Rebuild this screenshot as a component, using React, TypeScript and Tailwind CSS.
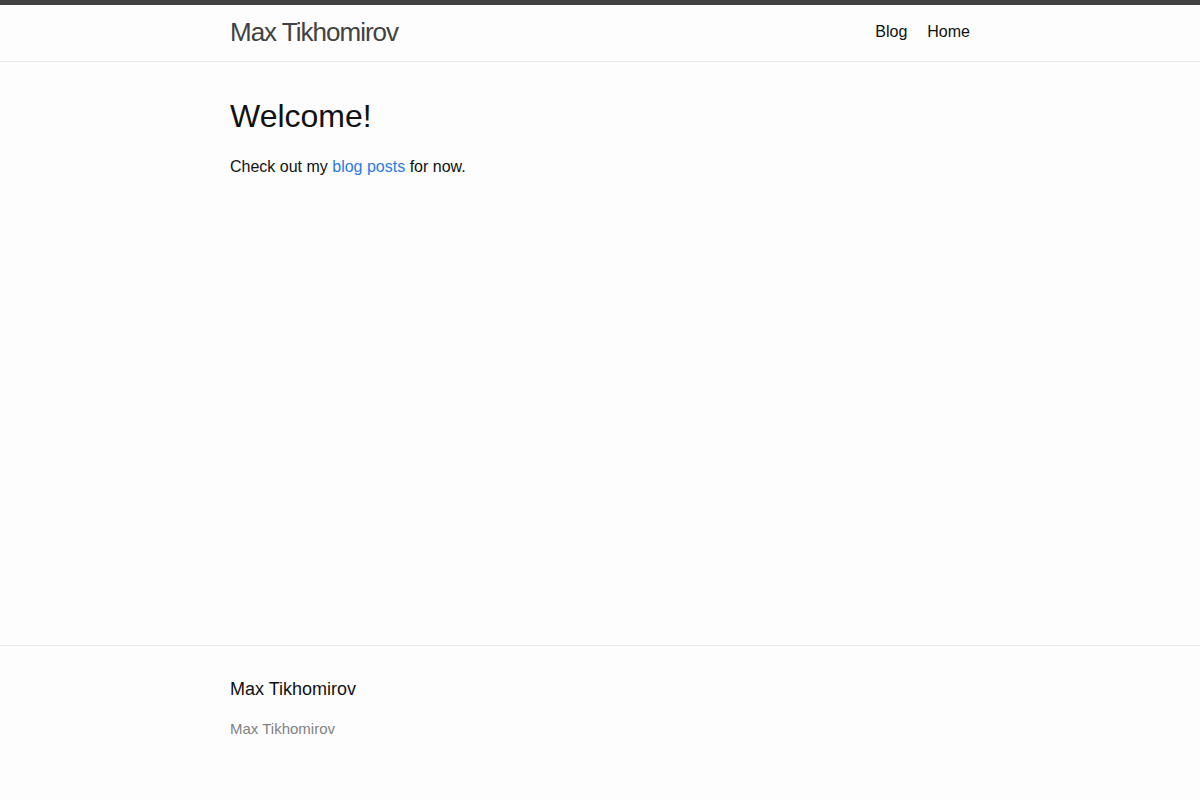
export default function App() {
  return (
    <div
      className="flex min-h-screen flex-col bg-[#fdfdfd] text-base leading-normal text-[#111]"
      style={{ fontFamily: '"Liberation Sans", Arial, sans-serif' }}
    >
      <header className="min-h-[62px] border-t-[5px] border-b border-t-[#424242] border-b-[#e8e8e8]">
        <div className="mx-auto flex max-w-[800px] items-start justify-between px-[30px]">
          <a href="#" className="text-[26px] font-light leading-[54px] tracking-[-1px] text-[#424242]">
            Max Tikhomirov
          </a>
          <nav className="flex gap-5 leading-[53px]">
            <a href="#" className="text-[#111]">Blog</a>
            <a href="#" className="text-[#111]">Home</a>
          </nav>
        </div>
      </header>

      <main className="flex-1 py-[30px]">
        <div className="mx-auto max-w-[800px] px-[30px]">
          <h1 className="mb-[15px] text-[32px] font-normal leading-normal">Welcome!</h1>
          <p>
            Check out my{' '}
            <a href="#" className="text-[#2a7ae2]">blog posts</a>{' '}
            for now.
          </p>
        </div>
      </main>

      <footer className="border-t border-[#e8e8e8] pt-[30px] pb-[60px]">
        <div className="mx-auto max-w-[800px] px-[30px]">
          <h2 className="mb-[15px] text-[18px] font-normal leading-normal">Max Tikhomirov</h2>
          <p className="text-[15px] leading-normal text-[#828282]">Max Tikhomirov</p>
        </div>
      </footer>
    </div>
  )
}
